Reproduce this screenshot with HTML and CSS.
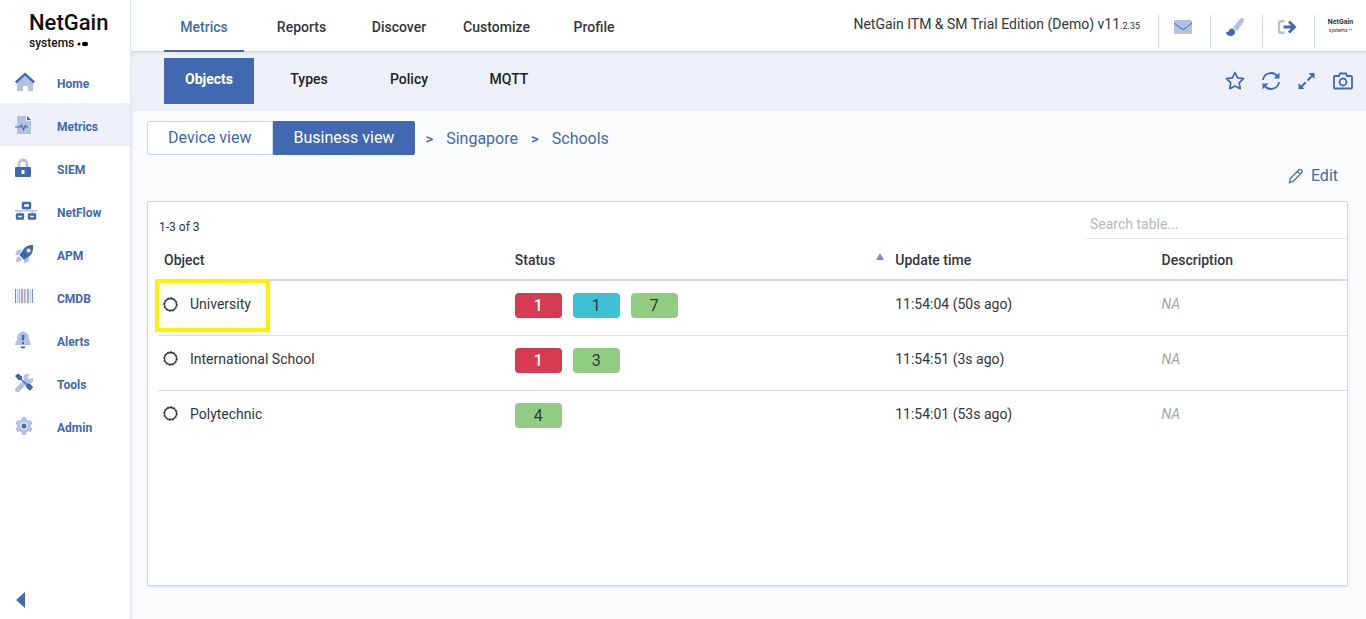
FILE: index.html
```html
<!DOCTYPE html>
<html lang="en">
<head>
    <meta charset="UTF-8">
    <meta name="viewport" content="width=device-width, initial-scale=1.0">
    <title>NetGain - Business view</title>
    <link rel="stylesheet" href="styles.css">
</head>
<body>
    <aside class="sidebar">
        <a class="logo" href="#">
            <span class="logo-name">NetGain</span>
            <span class="logo-sub">systems
                <svg width="12" height="6" viewBox="0 0 12 6"><circle cx="2" cy="3" r="1.5"/><ellipse cx="8" cy="3" rx="3" ry="2.2"/></svg>
            </span>
        </a>
        <nav class="side-menu">
            <a href="#">
                <svg viewBox="0 0 20 20"><path class="light" d="M2 11l8-7 8 7v8h-5v-5H8v5H2z"/><path class="line" d="M.8 10.5L10 2.2l9.2 8.3" stroke-width="2.4"/></svg>
                Home
            </a>
            <a href="#" class="active">
                <svg viewBox="0 0 20 20"><path class="light" d="M2 2a1 1 0 0 1 1-1h8v5h5v12a1 1 0 0 1-1 1H3a1 1 0 0 1-1-1z"/><path class="dark" d="M12 1l4 4h-4z"/><path class="line" d="M0 12h5l1.500-2 2 4.500 2-4 1 1.500H13" stroke-width="1.200"/></svg>
                Metrics
            </a>
            <a href="#">
                <svg viewBox="0 0 20 20"><path d="M4 9V6a4 4 0 0 1 8 0v3" fill="none" stroke="#b3c2e0" stroke-width="2.800"/><path class="dark" fill-rule="evenodd" d="M1 9h14a1 1 0 0 1 1 1v8a1 1 0 0 1-1 1H1a1 1 0 0 1-1-1v-8a1 1 0 0 1 1-1zm5.500 3v4h3v-4z"/></svg>
                SIEM
            </a>
            <a href="#">
                <svg class="wide" viewBox="0 0 22 20"><path class="light" d="M0 9h22v1.500H0zM10.500 7H13v3h-2.500zM4 10h1.500v3H4zM16.500 10H18v3h-1.500z"/><path class="line" d="M8 2h7v5H8zM2 13.500h6v4H2zM14 13.500h6v4h-6z" stroke-width="2.400" stroke-linejoin="round"/></svg>
                NetFlow
            </a>
            <a href="#">
                <svg viewBox="0 0 20 20"><path class="light" d="M7 6H3.500a2 2 0 0 0-2 1.200L0 11h4zM14 13v3a2 2 0 0 1-1 1.800L9 19.500v-4zM4 12l3 3c-1 2.500-3 3-6 3 0-3 .5-5 3-6z"/><path class="dark" fill-rule="evenodd" d="M18 1c.5 6-1 9-4 11.500L9 16 4.500 11 8 6c2-3.500 5-5 10-5zm-4.500 3.500a2 2 0 1 0 .1 4 2 2 0 0 0-.1-4z"/></svg>
                APM
            </a>
            <a href="#">
                <svg viewBox="0 0 20 20"><path fill="#e6ecf8" d="M0 2h18v14H0z"/><path fill="#6f87bd" d="M0 2h1v14H0z"/><path fill="#f7c4a8" d="M2 2h1v14H2zM10 2h1v14h-1zM15 2h1v14h-1z"/><path fill="#7fbcf2" d="M4 2h1v14H4zM6 2h2v14H6zM13 2h1v14h-1z"/><path fill="#d99a9a" d="M9 2h1v14H9zM12 2h1v14h-1z"/><path fill="#6f95d6" d="M17 2h1v14h-1z"/></svg>
                CMDB
            </a>
            <a href="#">
                <svg viewBox="0 0 20 20"><path class="light" d="M7 2a1 1 0 0 1 2 0c3.500.6 5 3 5 6 0 4 2 4 2 7H0c0-3 2-3 2-7 0-3 1.500-5.400 5-6z"/><path class="dark" d="M6.500 5h3L9 10.500H7zM7 12h2v2H7zM5.500 16.500h5a2.500 2 0 0 1-5 0z"/></svg>
                Alerts
            </a>
            <a href="#">
                <svg viewBox="0 0 20 20"><path class="light" d="M17.500 4.500l-3 2-2-2 2-3C10 0 7.500 3 9 7L.8 15a2.400 2.400 0 0 0 3.500 3.500L12.500 10c3.500 1.500 7-1 5-5.500z"/><path class="dark" d="M0 3l3-2.500 4 3v2.700l5 4.500c1.300-.6 2.400-.4 3.200.4l3 3-3.200 4-3.400-3.400c-1-.8-1.100-2-.6-3L6 7H3.500z"/></svg>
                Tools
            </a>
            <a href="#">
                <svg viewBox="0 0 20 20"><path class="light" d="M7 1h4l.6 2.600 1.600.9L15.600 4l2 3.200-1.800 1.800v2l1.800 1.800-2 3.200-2.400-.7-1.600.9L11 19H7l-.6-2.800-1.600-.9-2.400.7-2-3.200L2.200 11V9L.4 7.200 2.400 4l2.400.5 1.600-.9z"/><circle cx="9" cy="10" r="3.800" fill="#eef2fa"/><circle class="dark" cx="9" cy="10" r="2.500"/></svg>
                Admin
            </a>
        </nav>
        <button class="collapse" aria-label="Collapse menu">
            <svg width="9" height="16" viewBox="0 0 9 16"><path class="dark" d="M9 0v16L0 8z"/></svg>
        </button>
    </aside>

    <div class="page">
        <header class="topbar">
            <nav class="tabs">
                <a href="#" class="active">Metrics</a>
                <a href="#">Reports</a>
                <a href="#">Discover</a>
                <a href="#">Customize</a>
                <a href="#">Profile</a>
            </nav>
            <div class="edition">NetGain ITM &amp; SM Trial Edition (Demo) v11<small>.2.35</small></div>
            <div class="top-actions">
                <button aria-label="Messages">
                    <svg width="20" height="20" viewBox="0 0 20 20"><rect class="light" x="1" y="3" width="18" height="14" rx="1.500"/><path class="line" d="M1 6l7 5.500q2 1.500 4 0L19 6"/></svg>
                </button>
                <button aria-label="Theme">
                    <svg width="20" height="20" viewBox="0 0 20 20"><path class="light" d="M14.500 2.500C16 .8 17.500.6 18.500 1.500s.8 2.200-.2 3.700L12 14l-4-3.500z"/><path class="dark" d="M6.500 11.500c2 0 3.500 1.500 3.500 3.500 0 2.500-2 4-4.500 4C3 19 1 17.500 1 14.500c1.500 1 2.300.6 2.700-.6.500-1.500 1.500-2.400 2.800-2.400z"/></svg>
                </button>
                <button aria-label="Log out">
                    <svg width="20" height="20" viewBox="0 0 20 20"><path d="M7.500 4.200H4a2 2 0 0 0-2 2v7.600a2 2 0 0 0 2 2h3.500" fill="none" stroke="#b3c2e0" stroke-width="2.400"/><path class="line" d="M6.500 10H17M12 4.500l5.500 5.500-5.500 5.500" stroke-width="2.800"/></svg>
                </button>
                <button class="account" aria-label="Account">
                    <span class="mini-name">NetGain</span>
                    <span class="mini-sub">systems ••</span>
                </button>
            </div>
        </header>

        <div class="subbar">
            <nav class="subtabs">
                <a href="#" class="active">Objects</a>
                <a href="#">Types</a>
                <a href="#">Policy</a>
                <a href="#">MQTT</a>
            </nav>
            <div class="tools">
                <button aria-label="Favourite">
                    <svg width="20" height="20" viewBox="0 0 20 20"><path class="line" d="M10 1.500l2.600 5.400 5.900.8-4.300 4.100 1 5.900-5.200-2.800-5.200 2.800 1-5.900L1.500 7.700l5.900-.8z" stroke-width="1.700" stroke-linejoin="round"/></svg>
                </button>
                <button aria-label="Refresh">
                    <svg width="20" height="20" viewBox="0 0 20 20"><path class="line" d="M2 9a8 8 0 0 1 14.500-3.500M18 11a8 8 0 0 1-14.500 3.500" stroke-width="1.800"/><path class="dark" d="M18.500 1.500v6h-6zM1.500 18.500v-6h6z"/></svg>
                </button>
                <button aria-label="Full screen">
                    <svg width="20" height="20" viewBox="0 0 20 20"><path class="line" d="M4 16l4.800-4.800M10.500 9.500L15 5" stroke-width="2"/><path class="dark" d="M17.500 2v6L11.500 2zM1.500 18v-6l6 6z"/></svg>
                </button>
                <button aria-label="Snapshot">
                    <svg width="20" height="20" viewBox="0 0 20 20"><path class="line" d="M2 5h4l1-2.500h6L14 5h4a1 1 0 0 1 1 1v10.500a1 1 0 0 1-1 1H2a1 1 0 0 1-1-1V6a1 1 0 0 1 1-1z" stroke-width="1.800"/><circle class="line" cx="10" cy="11" r="3.500" stroke-width="1.800"/></svg>
                </button>
            </div>
        </div>

        <main class="content">
            <div class="view-row">
                <div class="view-switch">
                    <button>Device view</button>
                    <button class="active">Business view</button>
                </div>
                <nav class="crumbs">
                    <span>&gt;</span>
                    <a href="#">Singapore</a>
                    <span>&gt;</span>
                    <a href="#">Schools</a>
                </nav>
            </div>
            <button class="edit">
                <svg width="16" height="16" viewBox="0 0 16 16"><path class="line" d="M1.500 14.500l.8-4L11 1.800q1.200-1 2.500.2t.3 2.500L5.300 13.300zM9.500 3.500l3 3" stroke-width="1.300"/></svg>
                Edit
            </button>

            <section class="panel">
                <div class="panel-head">
                    <span>1-3 of 3</span>
                    <input type="text" placeholder="Search table..." aria-label="Search table">
                </div>
                <table>
                    <thead>
                        <tr>
                            <th class="col-object">Object</th>
                            <th class="col-status">Status</th>
                            <th class="col-time sorted">Update time</th>
                            <th class="col-desc">Description</th>
                        </tr>
                    </thead>
                    <tbody>
                        <tr>
                            <td class="marked">
                                <div class="object"><svg width="15" height="15" viewBox="0 0 15 15"><circle cx="7.500" cy="7.500" r="6"/><circle class="teeth" cx="7.500" cy="7.500" r="6.800"/></svg>University</div>
                            </td>
                            <td class="status"><div class="badges"><span class="red">1</span><span class="cyan">1</span><span class="green">7</span></div></td>
                            <td>11:54:04 (50s ago)</td>
                            <td class="na">NA</td>
                        </tr>
                        <tr>
                            <td>
                                <div class="object"><svg width="15" height="15" viewBox="0 0 15 15"><circle cx="7.500" cy="7.500" r="6"/><circle class="teeth" cx="7.500" cy="7.500" r="6.800"/></svg>International School</div>
                            </td>
                            <td class="status"><div class="badges"><span class="red">1</span><span class="green">3</span></div></td>
                            <td>11:54:51 (3s ago)</td>
                            <td class="na">NA</td>
                        </tr>
                        <tr>
                            <td>
                                <div class="object"><svg width="15" height="15" viewBox="0 0 15 15"><circle cx="7.500" cy="7.500" r="6"/><circle class="teeth" cx="7.500" cy="7.500" r="6.800"/></svg>Polytechnic</div>
                            </td>
                            <td class="status"><div class="badges"><span class="green">4</span></div></td>
                            <td>11:54:01 (53s ago)</td>
                            <td class="na">NA</td>
                        </tr>
                    </tbody>
                </table>
            </section>
        </main>
    </div>
</body>
</html>
```
FILE: styles.css
```css
*,
*::before,
*::after{
    box-sizing: border-box;
}
body{
    margin: 0;
    min-height: 100vh;
    display: flex;
    font-family: Roboto, "Liberation Sans", sans-serif;
    font-size: 14px;
    line-height: 20px;
    color: #32363f;
    background: #fafbfd;
}
a{
    color: inherit;
    text-decoration: none;
}
button{
    font: inherit;
    color: #4169b1;
    background: none;
    border: 0;
    padding: 0;
    cursor: pointer;
}
svg{
    flex: none;
}

/* shared icon colours */
.dark{
    fill: #4169b1;
}
.light{
    fill: #b3c2e0;
}
.line{
    fill: none;
    stroke: #4169b1;
}

/* sidebar */
.sidebar{
    width: 131px;
    flex: none;
    display: flex;
    flex-direction: column;
    background: white;
    border-right: 1px solid #dfe4f0;
    box-shadow: 1px 0 3px #e3e8f3;
    z-index: 1;
}
.logo{
    height: 60px;
    padding: 10px 0 0 29px;
    display: flex;
    flex-direction: column;
    color: #111;
}
.logo-name{
    font-size: 22px;
    line-height: 26px;
    font-weight: 500;
}
.logo-sub{
    font-size: 12px;
    line-height: 14px;
    font-weight: 500;
}
.side-menu a{
    height: 43px;
    padding: 4px 0 0 15px;
    display: flex;
    align-items: center;
    gap: 22px;
    font-size: 12px;
    font-weight: 700;
    line-height: 12px;
    color: #4169b1;
}
.side-menu svg{
    width: 20px;
    height: 20px;
    margin-bottom: 4px;
}
.side-menu .wide{
    width: 22px;
    margin-right: -2px;
}
.side-menu .active{
    background: #edf0f8;
}
.collapse{
    margin-top: auto;
    padding: 0 0 11px 16px;
    display: flex;
}

/* top bar */
.page{
    flex: 1;
    min-width: 0;
    display: flex;
    flex-direction: column;
}
.topbar{
    height: 52px;
    display: flex;
    padding-left: 33px;
    background: white;
    border-bottom: 1px solid #d3d9e6;
    box-shadow: 0 1px 3px #d9dfec;
    z-index: 1;
}
.tabs{
    width: 470px;
    display: flex;
    justify-content: space-between;
    font-weight: 500;
}
.tabs a{
    width: 80px;
    height: 52px;
    padding-top: 17px;
    text-align: center;
}
.tabs .active{
    color: #4169b1;
    border-bottom: 2px solid #4169b1;
}
.edition{
    margin-left: auto;
    padding: 14px 18px 0 0;
}
.edition small{
    font-size: 9px;
}
.top-actions{
    display: flex;
    padding-top: 15px;
}
.top-actions button{
    width: 52px;
    height: 33px;
    padding: 2px 3px 0 0;
    border-left: 1px solid #cbd4e5;
    display: flex;
    align-items: flex-start;
    justify-content: center;
}
.top-actions .account{
    flex-direction: column;
    align-items: center;
    justify-content: flex-start;
    padding: 3px 0 0;
    color: #333;
}
.mini-name{
    font-size: 7px;
    line-height: 9px;
    font-weight: 700;
}
.mini-sub{
    font-size: 5px;
    line-height: 6px;
}

/* second bar */
.subbar{
    height: 59px;
    padding: 6px 13px 0 33px;
    display: flex;
    justify-content: space-between;
    background: #edf0f8;
}
.subtabs{
    display: flex;
    gap: 10px;
    font-weight: 500;
    color: #222;
}
.subtabs a{
    width: 90px;
    height: 46px;
    padding-top: 11px;
    text-align: center;
}
.subtabs .active{
    color: white;
    background: #4169b1;
    font-weight: 700;
}
.tools{
    height: 46px;
    display: flex;
    align-items: center;
    gap: 16px;
}
.tools button{
    display: flex;
}

/* content */
.content{
    flex: 1;
    display: flex;
    flex-direction: column;
    padding: 10px 18px 33px 16px;
}
.view-row{
    display: flex;
    align-items: center;
    font-size: 16px;
}
.view-switch{
    display: flex;
}
.view-switch button{
    height: 34px;
    padding: 0 20px;
    background: white;
    border: 1px solid #d0d7e5;
    border-radius: 2px 0 0 2px;
}
.view-switch .active{
    color: white;
    background: #4169b1;
    border-color: #4169b1;
    border-radius: 0 2px 2px 0;
}
.crumbs{
    display: flex;
    gap: 13px;
    padding: 2px 0 0 10px;
    color: #4169b1;
}
.crumbs span{
    font-size: 15px;
    font-weight: 500;
}
.edit{
    align-self: flex-end;
    display: flex;
    align-items: center;
    gap: 7px;
    margin: 11px 10px 15px 0;
    font-size: 16px;
}
.panel{
    flex: 1;
    padding: 6px 0 0 10px;
    background: white;
    border: 1px solid #d0d8e6;
    border-radius: 2px;
    box-shadow: 0 1px 3px #dde2ec;
}
.panel-head{
    display: flex;
    justify-content: space-between;
    align-items: flex-end;
    font-size: 12px;
}
.panel-head span{
    padding: 0 0 2px 1px;
}
.panel-head input{
    width: 262px;
    height: 31px;
    padding: 2px 5px 0;
    font: inherit;
    font-size: 14px;
    border: 0;
    border-bottom: 1px solid #e6e8ec;
    outline: none;
}
.panel-head input::placeholder{
    color: #b5b8bd;
}

table{
    width: 100%;
    table-layout: fixed;
    border-collapse: collapse;
}
th{
    height: 41px;
    padding: 1px 6px 0;
    text-align: left;
    font-weight: 500;
    border-bottom: 2px solid #d3dcec;
}
.col-object{
    width: 29.5%;
}
.col-status{
    width: 32%;
}
.col-time{
    width: 22.4%;
}
.sorted{
    position: relative;
}
/* sort arrow hangs over the left edge of the sorted column */
.sorted::before{
    content: "";
    position: absolute;
    left: -13px;
    top: 14px;
    border: 4px solid transparent;
    border-top: 0;
    border-bottom: 7px solid #8087de;
}
td{
    height: 55px;
    padding: 13px 6px 0;
    vertical-align: top;
    border-bottom: 1px solid #d6dfe8;
}
.status{
    padding-top: 12px;
}
tbody tr:last-child td{
    border-bottom: 0;
}
.object{
    display: flex;
    align-items: center;
    gap: 12px;
    margin-left: -1px;
}
.object circle{
    fill: none;
    stroke: #32363f;
    stroke-width: 1.3;
}
.object .teeth{
    stroke-width: 1;
    stroke-dasharray: 2 1.5;
}
.marked{
    position: relative;
}
/* yellow frame over the first object */
.marked::after{
    content: "";
    position: absolute;
    left: -3px;
    top: -2px;
    width: 115px;
    height: 53px;
    border: 4px solid #fff200;
}
.badges{
    display: flex;
    gap: 11px;
}
.badges span{
    width: 47px;
    height: 25px;
    border-radius: 4px;
    font-size: 16px;
    line-height: 25px;
    text-align: center;
}
.red{
    color: white;
    background: #d73a53;
    font-weight: 500;
}
.cyan{
    background: #3fc1d4;
}
.green{
    background: #90cd83;
}
.na{
    color: #a5a5a5;
    font-style: italic;
}
```
